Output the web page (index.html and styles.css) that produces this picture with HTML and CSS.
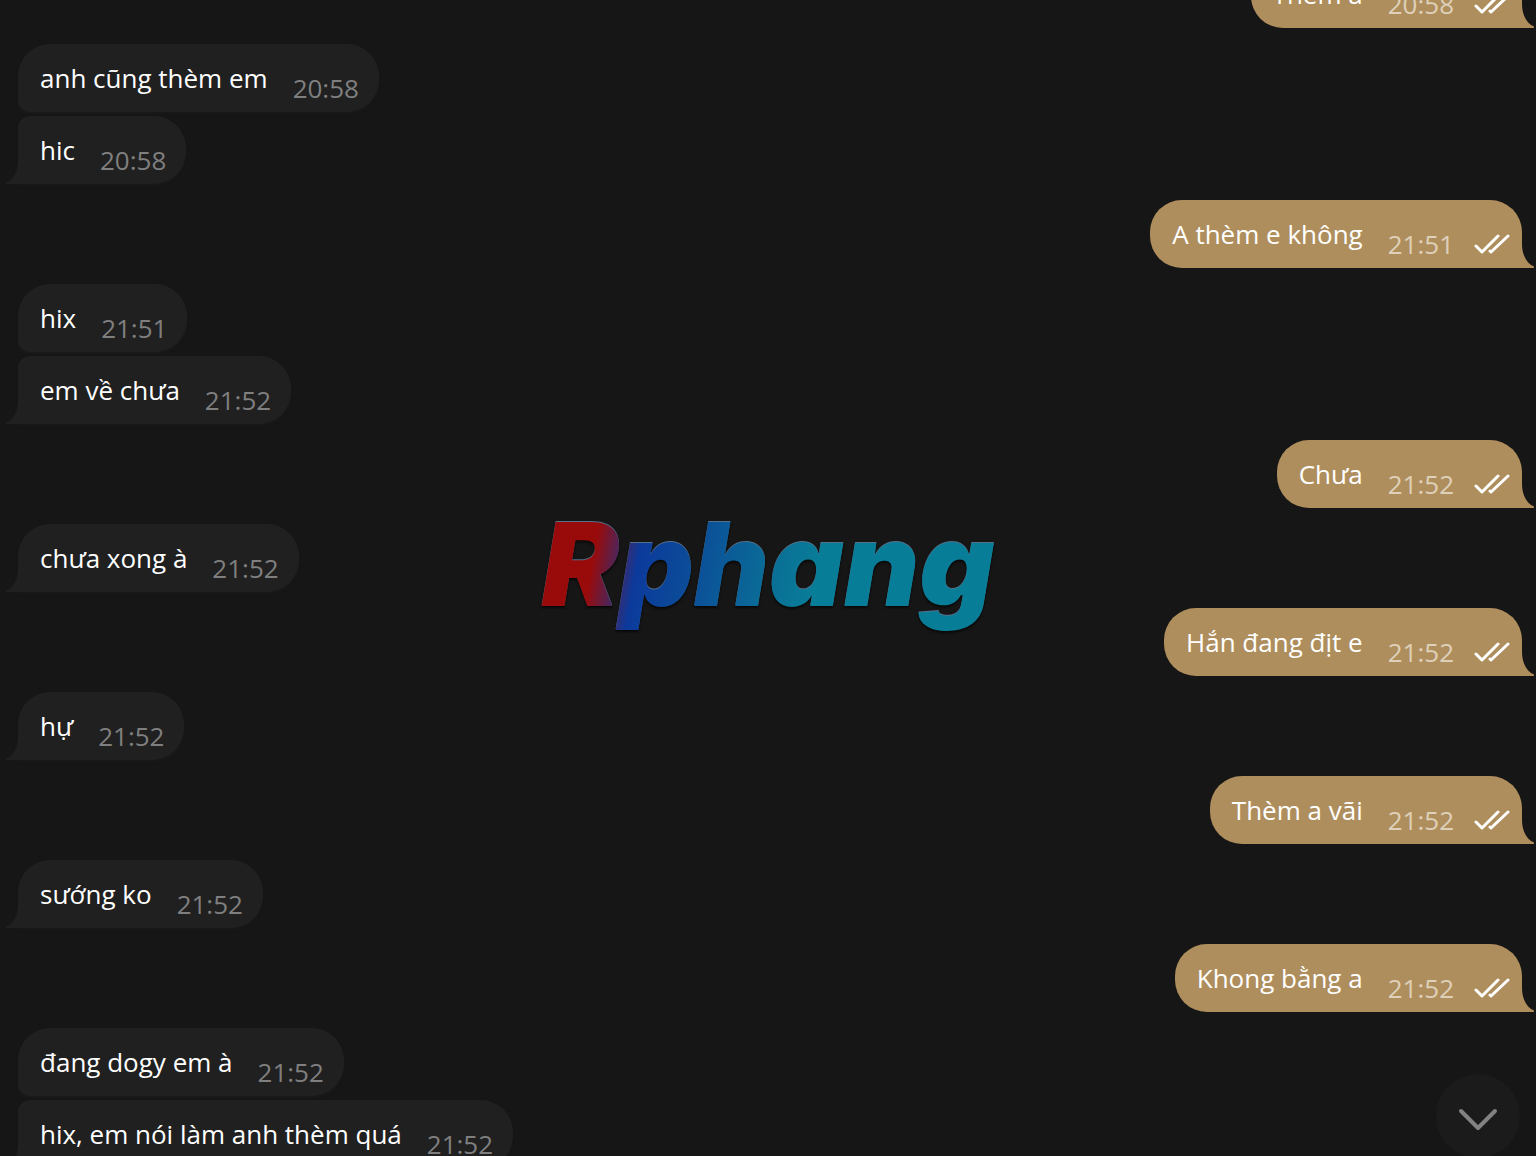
FILE: index.html
```html
<!DOCTYPE html>
<html lang="vi">
<head>
<meta charset="utf-8">
<meta name="viewport" content="width=device-width, initial-scale=1">
<title>Chat</title>
<link rel="stylesheet" href="styles.css">
</head>
<body>
<svg class="symbols" aria-hidden="true">
  <symbol id="tail-in" viewBox="0 0 12 24"><path d="M12 0V24H0V22.5C8 19 12 10 12 0Z"/></symbol>
  <symbol id="tail-out" viewBox="0 0 12 24"><path d="M0 0V24H12V22.5C4 19 0 10 0 0Z"/></symbol>
  <symbol id="checks" viewBox="0 0 36 20"><path d="M2 12L8 18L24 2M16 17L17 18L34 2" fill="none" stroke="currentColor" stroke-width="3" stroke-linecap="round" stroke-linejoin="round"/></symbol>
</svg>
<main class="chat">
  <ol class="messages">
    <li class="bubble out"><span class="text">Thèm a</span><time>20:58</time><svg class="checks"><use href="#checks"/></svg><svg class="tail"><use href="#tail-out"/></svg></li>
    <li class="bubble in first"><span class="text">anh cũng thèm em</span><time>20:58</time></li>
    <li class="bubble in next"><span class="text">hic</span><time>20:58</time><svg class="tail"><use href="#tail-in"/></svg></li>
    <li class="bubble out"><span class="text">A thèm e không</span><time>21:51</time><svg class="checks"><use href="#checks"/></svg><svg class="tail"><use href="#tail-out"/></svg></li>
    <li class="bubble in first"><span class="text">hix</span><time>21:51</time></li>
    <li class="bubble in next"><span class="text">em về chưa</span><time>21:52</time><svg class="tail"><use href="#tail-in"/></svg></li>
    <li class="bubble out"><span class="text">Chưa</span><time>21:52</time><svg class="checks"><use href="#checks"/></svg><svg class="tail"><use href="#tail-out"/></svg></li>
    <li class="bubble in"><span class="text">chưa xong à</span><time>21:52</time><svg class="tail"><use href="#tail-in"/></svg></li>
    <li class="bubble out"><span class="text">Hắn đang địt e</span><time>21:52</time><svg class="checks"><use href="#checks"/></svg><svg class="tail"><use href="#tail-out"/></svg></li>
    <li class="bubble in"><span class="text">hự</span><time>21:52</time><svg class="tail"><use href="#tail-in"/></svg></li>
    <li class="bubble out"><span class="text">Thèm a vãi</span><time>21:52</time><svg class="checks"><use href="#checks"/></svg><svg class="tail"><use href="#tail-out"/></svg></li>
    <li class="bubble in"><span class="text">sướng ko</span><time>21:52</time><svg class="tail"><use href="#tail-in"/></svg></li>
    <li class="bubble out"><span class="text">Khong bằng a</span><time>21:52</time><svg class="checks"><use href="#checks"/></svg><svg class="tail"><use href="#tail-out"/></svg></li>
    <li class="bubble in first"><span class="text">đang dogy em à</span><time>21:52</time></li>
    <li class="bubble in next"><span class="text">hix, em nói làm anh thèm quá</span><time>21:52</time><svg class="tail"><use href="#tail-in"/></svg></li>
  </ol>
  <div class="watermark"><span class="brand">Rphang</span></div>
  <button class="to-bottom" type="button" aria-label="Cuộn xuống">
    <svg viewBox="0 0 40 24" aria-hidden="true"><path d="M3 3L20 20L37 3" fill="none" stroke="currentColor" stroke-width="4" stroke-linecap="round" stroke-linejoin="round"/></svg>
  </button>
</main>
</body>
</html>
```
FILE: styles.css
```css
* {
  box-sizing: border-box;
}

body {
  margin: 0;
  background: #161616;
  color: #fff;
  font: 26px/36px "Open Sans", "Noto Sans", sans-serif;
}

.symbols {
  display: none;
}

.chat {
  position: relative;
  height: 100vh;
  overflow: hidden;
}

/* The list is scrolled so that the first bubble is partly out of view. */
.messages {
  display: flex;
  flex-direction: column;
  gap: 16px;
  margin: -40px 0 0;
  padding: 0 14px 0 18px;
  list-style: none;
}

.bubble {
  position: relative;
  display: flex;
  align-items: flex-end;
  max-width: 80%;
  border-radius: 32px;
}

.in {
  align-self: flex-start;
  gap: 25px;
  padding: 16px 20px 6px 22px;
  background: #202020;
  border-bottom-left-radius: 0;
  box-shadow: 0 2px 2px #191919;
}

.in.first {
  border-bottom-left-radius: 12px;
}

.in.next {
  margin-top: -12px;
  border-top-left-radius: 12px;
}

.out {
  align-self: flex-end;
  padding: 16px 12px 6px 22px;
  background: #ae8e5d;
  border-bottom-right-radius: 0;
}

.out time {
  margin: 0 20px 0 25px;
  color: #dfd0ba;
}

.text {
  padding-bottom: 10px;
}

time {
  color: #7f7f7f;
}

.checks {
  width: 36px;
  height: 20px;
  margin-bottom: 8px;
}

.tail {
  position: absolute;
  bottom: 0;
  width: 12px;
  height: 24px;
}

.in .tail {
  right: 100%;
  fill: #202020;
}

.out .tail {
  left: 100%;
  fill: #ae8e5d;
}

.watermark {
  position: absolute;
  inset: 0;
  display: flex;
  align-items: center;
  justify-content: center;
  padding-bottom: 28px;
  pointer-events: none;
}

.brand {
  padding: 0 12px;
  background: linear-gradient(100deg, #990b0b 15%, #0c3a9c 24%, #0b4b98 34%, #0a7096 52%, #087d98 60%);
  background-clip: text;
  color: transparent;
  font: italic 900 116px/140px Inter, "Open Sans", sans-serif;
  filter: drop-shadow(0 -1px 0 #55708a) drop-shadow(0 2px 1px #080808);
}

.to-bottom {
  position: absolute;
  right: 16px;
  bottom: -2px;
  display: grid;
  place-items: center;
  width: 84px;
  height: 84px;
  padding: 8px 0 0;
  border: 0;
  border-radius: 50%;
  background: #1b1b1b;
  color: #828282;
}

.to-bottom svg {
  width: 40px;
  height: 24px;
}
```
